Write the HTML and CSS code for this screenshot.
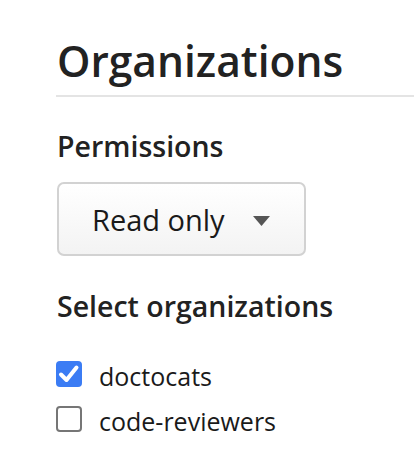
FILE: index.html
```html
<!DOCTYPE html>
<html>
<head>
<meta charset="utf-8">
<link rel="stylesheet" href="styles.css">
</head>
<body>
<main class="page">
  <h1 class="title">Organizations</h1>
  <div class="rule"></div>
  <h2 class="label">Permissions</h2>
  <button class="select" type="button">
    <span class="select-text">Read only</span>
    <svg class="caret" width="17" height="10" viewBox="0 0 17 10"><path d="M0 0H17L8.5 10Z" fill="#555"/></svg>
  </button>
  <h2 class="label label-orgs">Select organizations</h2>
  <ul class="orgs">
    <li class="org">
      <span class="box box-checked"><svg width="26" height="26" viewBox="0 0 26 26"><path d="M5 13.5L10.5 19L20.5 6.5" fill="none" stroke="#fff" stroke-width="4" stroke-linecap="round" stroke-linejoin="round"/></svg></span>
      <span class="org-name">doctocats</span>
    </li>
    <li class="org">
      <span class="box"></span>
      <span class="org-name">code-reviewers</span>
    </li>
  </ul>
</main>
</body>
</html>
```
FILE: styles.css
```css
html, body {
  margin: 0;
  padding: 0;
  background: #fff;
}
.page {
  padding-left: 57px;
  font-family: "Open Sans", Lato, sans-serif;
  font-variant-ligatures: none;
  color: #222;
}
.title {
  margin: 35px 0 0;
  font-size: 42.5px;
  line-height: 52px;
  font-weight: 600;
}
.rule {
  height: 2px;
  background: #e4e4e4;
  margin-top: 8px;
  margin-left: -1px;
}
.label {
  margin: 33px 0 0;
  font-size: 28.5px;
  line-height: 32px;
  font-weight: 600;
}
.label-orgs {
  margin-top: 34px;
}
.select {
  display: flex;
  align-items: center;
  justify-content: space-between;
  box-sizing: border-box;
  width: 249px;
  height: 74px;
  margin-top: 20px;
  padding: 0 34px 0 33px;
  border: 2px solid #d2d2d2;
  border-radius: 7px;
  background: linear-gradient(#ffffff, #f3f3f3);
  font-family: inherit;
  font-size: 29px;
  color: #1a1a1a;
}
.caret {
  display: block;
  margin-top: 3px;
}
.orgs {
  list-style: none;
  margin: 39px 0 0;
  padding: 0;
  display: flex;
  flex-direction: column;
  gap: 19px;
}
.org {
  display: flex;
  align-items: center;
  gap: 17px;
  height: 26px;
  font-size: 25px;
}
.box {
  box-sizing: border-box;
  width: 26px;
  height: 26px;
  border: 2px solid #767676;
  border-radius: 4px;
  margin-left: -1px;
  flex: none;
}
.box svg {
  display: block;
}
.box-checked {
  border: none;
  background: #3b7cf4;
}
.org-name {
  color: #1a1a1a;
  padding-top: 3px;
}
```
